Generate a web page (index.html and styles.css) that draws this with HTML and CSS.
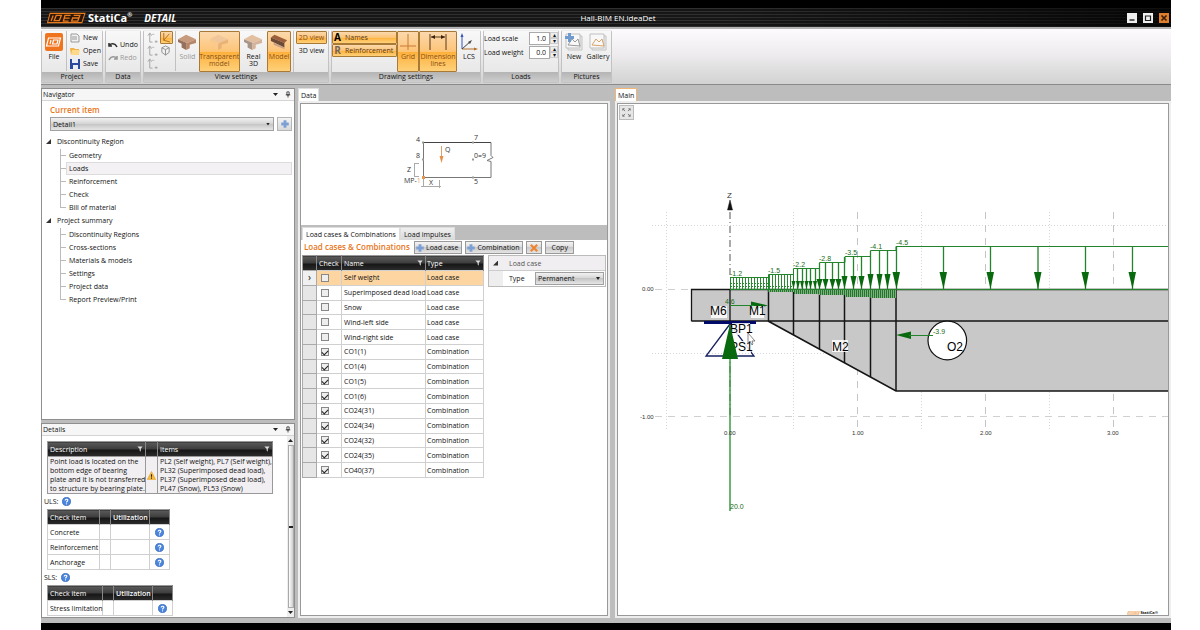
FILE: index.html
```html
<!DOCTYPE html>
<html lang="en">
<head>
    <meta charset="UTF-8">
    <meta name="viewport" content="width=device-width, initial-scale=1.0">
    <title>Hall-BIM EN.ideaDet</title>
    <link rel="stylesheet" href="styles.css">
</head>
<body>
    <!-- Shared icons -->
    <svg class="defs" width="0" height="0" aria-hidden="true">
        <symbol id="plus" viewBox="0 0 10 10"><path d="M3.5 0.5h3v3h3v3h-3v3h-3v-3h-3v-3h3z" fill="#7b9fd6" stroke="#8aa6d0" stroke-width="0.6"/></symbol>
        <symbol id="help" viewBox="0 0 10 10"><circle cx="5" cy="5" r="4.5" fill="#4a86dd" stroke="#2c62b8" stroke-width="0.8"/><path d="M3.5 4c0-2 3-2 3-.3C6.500 4.700 5 4.700 5 6" fill="none" stroke="#fff" stroke-width="1.200"/><circle cx="5" cy="7.600" r="0.700" fill="#fff"/></symbol>
        <symbol id="funnel" viewBox="0 0 8 8"><path d="M0.500 0.500h7L5 3.500v4L3.500 6V3.500z" fill="#ddd"/></symbol>
        <symbol id="pin" viewBox="0 0 8 8"><path d="M2.500 0.500h3v4h-3zM1 4.500h6M4 4.500V8" fill="none" stroke="#222"/></symbol>
        <symbol id="house" viewBox="0 0 20 18"><path d="M0 6L9 1l11 5-10 4z" fill="var(--top)"/><path d="M0 6v3l4 2v4l5 3v-6l1-2z" fill="var(--side)"/><path d="M10 10l10-4v4l-7 2v4l-4 2v-6z" fill="var(--face)"/></symbol>
        <symbol id="axes" viewBox="0 0 12 12"><path d="M3 11V2M1 4l2-3 2 3M3 11h3M9 10h2v1H9z" fill="none" stroke="#a3a3a3"/><path d="M5 2h3v1H5z" fill="#bbb"/></symbol>
        <symbol id="picture" viewBox="0 0 18 18"><path d="M3 3h14v14H3z" fill="#ececec" stroke="#c4c4c4"/><path d="M1 1h14v14H1z" fill="#f8f8f8" stroke="#c0c0c0"/><path d="M3 12l4-6 3 3 3-3 2 7z" fill="none" stroke="var(--ink)"/></symbol>
    </svg>

    <div class="app">
        <header class="titlebar">
            <div class="brand">
                <svg class="logo" viewBox="0 0 38 11" aria-label="IDEA"><path d="M3 1h34l-3 9H0.500z" fill="#2a1708" stroke="#e87b1d"/><path d="M6 3L4 8.500M9 3h5l-2 5H7zM23 3h-5.500l-1.500 5.500h5M17 5.700h5M26 3h6L30 8.500h-6l1-3h6" fill="none" stroke="#e87b1d" stroke-width="1.300"/></svg>
                <span class="brand-name">StatiCa<sup>®</sup></span>
                <span class="product">DETAIL</span>
            </div>
            <div class="filename">Hall-BIM EN.ideaDet</div>
            <div class="window-buttons">
                <button aria-label="Minimize"><svg viewBox="0 0 10 10"><path d="M2.500 7h5" stroke="#222" stroke-width="1.400"/></svg></button>
                <button aria-label="Maximize"><svg viewBox="0 0 10 10"><path d="M2.500 3h5v4.500h-5z" fill="none" stroke="#222" stroke-width="1.200"/></svg></button>
                <button class="close" aria-label="Close"><svg viewBox="0 0 10 10"><path d="M2.500 2.500l5 5M7.500 2.500l-5 5" stroke="#3a1c06" stroke-width="1.600"/></svg></button>
            </div>
        </header>

        <nav class="ribbon">
            <section class="group project">
                <div class="group-body">
                    <button class="big">
                        <svg viewBox="0 0 18 18"><rect width="18" height="18" rx="2" fill="#f0731d"/><path d="M3.500 5h12l-2 8h-12zM6 7l-1 4M8.500 7H13l-1 4H7.500z" fill="none" stroke="#fff" stroke-width="1.200"/></svg>
                        <span>File</span>
                    </button>
                    <div class="stack ruled">
                        <button class="small"><svg viewBox="0 0 10 10"><path d="M1 1h6l2 2v6H1z" fill="#f2f2f2" stroke="#999"/><path d="M2 4h5M2 6h5" stroke="#999"/></svg>New</button>
                        <button class="small"><svg viewBox="0 0 10 10"><path d="M0 2h4l1 1h4v6H1z" fill="#f0b24a"/><path d="M2 4h8L8.500 9H1z" fill="#ffd98a"/></svg>Open</button>
                        <button class="small"><svg viewBox="0 0 10 10"><path d="M0 0h10v10H0z" fill="#29479c"/><path d="M2 0h6v4H2zM3 6h5v4H3z" fill="#e8ecf5"/></svg>Save</button>
                    </div>
                </div>
                <h2>Project</h2>
            </section>
            <section class="group data">
                <div class="group-body">
                    <div class="stack">
                        <button class="small"><svg viewBox="0 0 10 10"><path d="M1 3v3h3M1.500 5.500C3 3 7 3 9 7" fill="none" stroke="#333" stroke-width="1.600"/></svg>Undo</button>
                        <button class="small" disabled><svg viewBox="0 0 10 10"><path d="M9 3v3H6M8.500 5.500C7 3 3 3 1 7" fill="none" stroke="#999" stroke-width="1.600"/></svg>Redo</button>
                    </div>
                </div>
                <h2>Data</h2>
            </section>
            <section class="group view">
                <div class="group-body">
                    <div class="view-icons">
                        <button aria-label="Front view"><svg><use href="#axes"/></svg></button>
                        <button class="active" aria-label="Axonometry"><svg viewBox="0 0 12 12"><path d="M3 1v8l7 2M3 9l6-7" fill="none" stroke="#b06a14"/></svg></button>
                        <button aria-label="Side view"><svg><use href="#axes"/></svg></button>
                        <button aria-label="Perspective"><svg viewBox="0 0 12 12"><path d="M6 1l4 2v5l-4 3-4-3V3zM2 3l4 2 4-2M6 5v6" fill="none" stroke="#8d8d8d"/></svg></button>
                        <button aria-label="Top view"><svg><use href="#axes"/></svg></button>
                    </div>
                    <button class="big ruled solid" disabled><svg class="house-brown"><use href="#house"/></svg><span>Solid</span></button>
                    <button class="big active transparent"><svg class="house-clear"><use href="#house"/></svg><span>Transparent<br>model</span></button>
                    <button class="big real"><svg class="house-pale"><use href="#house"/></svg><span>Real<br>3D</span></button>
                    <button class="big active model"><svg viewBox="0 0 20 18"><path d="M1 4l4-3 14 6-3 3z" fill="#9b5f3c"/><path d="M1 4l15 6v5L1 8z" fill="#6b4a38"/><path d="M4 9.500l12 5.500v2L4 12z" fill="#c8a086"/></svg><span>Model</span></button>
                    <div class="dims ruled">
                        <button class="active">2D view</button>
                        <button>3D view</button>
                    </div>
                </div>
                <h2>View settings</h2>
            </section>
            <section class="group drawing">
                <div class="group-body">
                    <div class="toggles">
                        <button class="active"><b class="letter dark">A</b>Names</button>
                        <button class="active"><b class="letter">R</b>Reinforcement</button>
                    </div>
                    <button class="big active grid-button"><svg viewBox="0 0 18 18"><path d="M9 1v16M1 13h16" stroke="#c97b36"/></svg><span>Grid</span></button>
                    <button class="big active dimension"><svg viewBox="0 0 18 18"><path d="M1 1v16M17 1v16M2 4h14" stroke="#5d3a1c"/><path d="M2 4l4-2v4zM16 4l-4-2v4z" fill="#3a2210"/></svg><span>Dimension<br>lines</span></button>
                    <button class="big lcs"><svg viewBox="0 0 18 18"><path d="M2 16V2" stroke="#3355bb"/><path d="M0.500 4L2 0l1.500 4z" fill="#3355bb"/><path d="M2 16h14" stroke="#b3702b"/><path d="M14 14.500l4 1.500-4 1.500z" fill="#b3702b"/><path d="M2 16l9-8" stroke="#444"/><path d="M12 7l-4 2 2 2z" fill="#444"/></svg><span>LCS</span></button>
                </div>
                <h2>Drawing settings</h2>
            </section>
            <section class="group loads">
                <div class="group-body">
                    <div class="spin-row"><label for="loadScale">Load scale</label><input id="loadScale" type="text" value="1.0"><span class="spin"><button aria-label="Scale up">▴</button><button aria-label="Scale down">▾</button></span></div>
                    <div class="spin-row"><label for="loadWeight">Load weight</label><input id="loadWeight" type="text" value="0.0"><span class="spin"><button aria-label="Weight up">▴</button><button aria-label="Weight down">▾</button></span></div>
                </div>
                <h2>Loads</h2>
            </section>
            <section class="group pictures">
                <div class="group-body">
                    <button class="big"><svg viewBox="0 0 18 18" class="ink-gray"><use href="#picture"/><path d="M3 0h3v3h3v3H6v3H3V6H0V3h3z" fill="#6f9bd1"/></svg><span>New</span></button>
                    <button class="big"><svg viewBox="0 0 18 18" class="ink-orange"><use href="#picture"/></svg><span>Gallery</span></button>
                </div>
                <h2>Pictures</h2>
            </section>
        </nav>

        <div class="workspace">
            <aside class="sidebar">
                <section class="panel navigator">
                    <header class="panel-header"><h2>Navigator</h2><i class="caret"></i><svg><use href="#pin"/></svg></header>
                    <div class="panel-body">
                        <label class="current-label" for="currentItem">Current item</label>
                        <div class="current-row">
                            <div class="select"><select id="currentItem"><option>Detail1</option></select></div>
                            <button class="add" aria-label="Add item"><svg><use href="#plus"/></svg></button>
                        </div>
                        <ul class="tree">
                            <li><span class="branch">Discontinuity Region</span>
                                <ul>
                                    <li><a href="#">Geometry</a></li>
                                    <li><a href="#" class="selected">Loads</a></li>
                                    <li><a href="#">Reinforcement</a></li>
                                    <li><a href="#">Check</a></li>
                                    <li><a href="#">Bill of material</a></li>
                                </ul>
                            </li>
                            <li><span class="branch">Project summary</span>
                                <ul>
                                    <li><a href="#">Discontinuity Regions</a></li>
                                    <li><a href="#">Cross-sections</a></li>
                                    <li><a href="#">Materials &amp; models</a></li>
                                    <li><a href="#">Settings</a></li>
                                    <li><a href="#">Project data</a></li>
                                    <li><a href="#">Report Preview/Print</a></li>
                                </ul>
                            </li>
                        </ul>
                    </div>
                </section>

                <section class="panel details">
                    <header class="panel-header"><h2>Details</h2><i class="caret"></i><svg><use href="#pin"/></svg></header>
                    <div class="details-body">
                        <div class="details-content">
                            <table class="dark-table messages">
                                <thead><tr><th class="col-desc"><div>Description<svg><use href="#funnel"/></svg></div></th><th class="col-icon"></th><th><div>Items<svg><use href="#funnel"/></svg></div></th></tr></thead>
                                <tbody><tr>
                                    <td>Point load is located on the<br>bottom edge of bearing<br>plate and it is not transferred<br>to structure by bearing plate.</td>
                                    <td class="warn"><svg viewBox="0 0 10 10"><path d="M5 0.500L9.700 9.500H0.300z" fill="#f9bb3d" stroke="#e39a1c" stroke-width="0.600"/><path d="M5 3.500v3M5 7.300v1.200" stroke="#222" stroke-width="1.200"/></svg></td>
                                    <td>PL2 (Self weight), PL7 (Self weight),<br>PL32 (Superimposed dead load),<br>PL37 (Superimposed dead load),<br>PL47 (Snow), PL53 (Snow)</td>
                                </tr></tbody>
                            </table>
                            <p class="state">ULS: <svg><use href="#help"/></svg></p>
                            <table class="dark-table checks">
                                <thead><tr><th class="col-item">Check item</th><th class="col-gap"></th><th class="col-util">Utilization</th><th class="col-help"></th></tr></thead>
                                <tbody>
                                    <tr><td>Concrete</td><td></td><td></td><td><svg><use href="#help"/></svg></td></tr>
                                    <tr><td>Reinforcement</td><td></td><td></td><td><svg><use href="#help"/></svg></td></tr>
                                    <tr><td>Anchorage</td><td></td><td></td><td><svg><use href="#help"/></svg></td></tr>
                                </tbody>
                            </table>
                            <p class="state">SLS: <svg><use href="#help"/></svg></p>
                            <table class="dark-table checks wide">
                                <thead><tr><th class="col-item">Check item</th><th class="col-gap"></th><th class="col-util">Utilization</th><th class="col-help"></th></tr></thead>
                                <tbody>
                                    <tr><td>Stress limitation</td><td></td><td></td><td><svg><use href="#help"/></svg></td></tr>
                                </tbody>
                            </table>
                        </div>
                        <div class="scrollbar"><i class="up"></i><span class="track"><i class="grip"></i></span><i class="caret"></i></div>
                    </div>
                </section>
            </aside>

            <section class="data-pane">
                <div class="tabs"><button class="tab">Data</button></div>
                <div class="frame">
                    <div class="sketch">
                        <svg width="100" height="60" viewBox="400 130 100 60">
                            <path d="M423 142.500h68" stroke="#444"/>
                            <path d="M423.500 143v34M423 177.500h68v-16l-4-1 6-3-2-2v-13" fill="none" stroke="#777"/>
                            <path d="M414 163.500h5M414 176.500h5M414.500 163v14M423.500 179v8M439.500 180v8M421 186.500h20" fill="none" stroke="#aaa"/>
                            <path d="M441.500 146v12" stroke="#d9a273"/><path d="M439.500 156h4l-2 7z" fill="#e6924a"/>
                            <path d="M422 176h3v3h-3z" fill="#e9954f"/>
                            <path d="M422 142.500h2M472 142.500h2M422 159.500h2M472 159.500h2M472 177.500h2" stroke="#999" stroke-width="2"/>
                            <text x="416" y="142">4</text><text x="474" y="140">7</text><text x="416" y="158">8</text>
                            <text x="445" y="152">Q</text><text x="474" y="158">0=9</text><text x="407" y="172">Z</text>
                            <text x="404" y="183">MP-<tspan fill="#eaa566">1</tspan></text><text x="429" y="185">X</text><text x="474" y="184">5</text>
                        </svg>
                    </div>
                    <div class="subtabs"><button class="tab">Load cases &amp; Combinations</button><button class="tab inactive">Load impulses</button></div>
                    <div class="cases">
                        <div class="toolbar">
                            <h3>Load cases &amp; Combinations</h3>
                            <button><svg><use href="#plus"/></svg>Load case</button>
                            <button><svg><use href="#plus"/></svg>Combination</button>
                            <button class="delete" aria-label="Delete"><svg viewBox="0 0 10 10"><path d="M1 1l8 8M9 1L1 9" stroke="#ee8331" stroke-width="2.600"/></svg></button>
                            <button class="copy">Copy</button>
                        </div>
                        <div class="cases-row">
                            <table class="case-table">
                                <thead><tr><th class="col-mark"></th><th class="col-check">Check</th><th class="col-name"><div>Name<svg><use href="#funnel"/></svg></div></th><th class="col-type"><div>Type<svg><use href="#funnel"/></svg></div></th></tr></thead>
                                <tbody>
                                    <tr class="selected"><td>›</td><td><input type="checkbox" aria-label="Self weight"></td><td>Self weight</td><td>Load case</td></tr>
                                    <tr><td></td><td><input type="checkbox" aria-label="Superimposed dead load"></td><td>Superimposed dead load</td><td>Load case</td></tr>
                                    <tr><td></td><td><input type="checkbox" aria-label="Snow"></td><td>Snow</td><td>Load case</td></tr>
                                    <tr><td></td><td><input type="checkbox" aria-label="Wind-left side"></td><td>Wind-left side</td><td>Load case</td></tr>
                                    <tr><td></td><td><input type="checkbox" aria-label="Wind-right side"></td><td>Wind-right side</td><td>Load case</td></tr>
                                    <tr><td></td><td><input type="checkbox" aria-label="CO1(1)" checked></td><td>CO1(1)</td><td>Combination</td></tr>
                                    <tr><td></td><td><input type="checkbox" aria-label="CO1(4)" checked></td><td>CO1(4)</td><td>Combination</td></tr>
                                    <tr><td></td><td><input type="checkbox" aria-label="CO1(5)" checked></td><td>CO1(5)</td><td>Combination</td></tr>
                                    <tr><td></td><td><input type="checkbox" aria-label="CO1(6)" checked></td><td>CO1(6)</td><td>Combination</td></tr>
                                    <tr><td></td><td><input type="checkbox" aria-label="CO24(31)" checked></td><td>CO24(31)</td><td>Combination</td></tr>
                                    <tr><td></td><td><input type="checkbox" aria-label="CO24(34)" checked></td><td>CO24(34)</td><td>Combination</td></tr>
                                    <tr><td></td><td><input type="checkbox" aria-label="CO24(32)" checked></td><td>CO24(32)</td><td>Combination</td></tr>
                                    <tr><td></td><td><input type="checkbox" aria-label="CO24(35)" checked></td><td>CO24(35)</td><td>Combination</td></tr>
                                    <tr><td></td><td><input type="checkbox" aria-label="CO40(37)" checked></td><td>CO40(37)</td><td>Combination</td></tr>
                                </tbody>
                            </table>
                            <div class="properties">
                                <div class="prop-title"><i class="fold"></i>Load case</div>
                                <div class="prop-row"><label for="caseType">Type</label><div class="select"><select id="caseType"><option>Permanent</option></select></div></div>
                            </div>
                        </div>
                    </div>
                </div>
            </section>

            <main class="main-pane">
                <div class="tabs"><button class="tab focus">Main</button></div>
                <div class="frame">
                    <div class="canvas">
                        <button class="fit" aria-label="Zoom to fit"><svg viewBox="0 0 14 14"><path d="M3 3l2.500 2.500M11 3L8.500 5.500M3 11l2.500-2.500M11 11L8.500 8.500M3 5V3h2M9 3h2v2M3 9v2h2M9 11h2V9" fill="none" stroke="#777"/></svg></button>
                        <svg class="model-view">
                            <defs>
                                <pattern id="hatch" width="3" height="12" patternUnits="userSpaceOnUse" x="730" y="277"><path d="M0.500 0v12" stroke="#2a8a31"/></pattern>
                                <pattern id="denseHatch" width="2" height="10" patternUnits="userSpaceOnUse" x="768" y="289"><rect width="2" height="10" fill="#86ab88"/><path d="M0.500 0v10" stroke="#1c7a24"/></pattern>
                            </defs>
                            <g transform="translate(-618 -104)">
                                <!-- dotted half metre grid, dashed metre grid -->
                                <g stroke="#d5d5dc" stroke-dasharray="1 2">
                                    <path d="M666.500 212v218M793.500 212v218M921.500 212v218M1049.500 212v218M652 225.500h520M652 353.500h520"/>
                                </g>
                                <path d="M857.500 212v218M985.500 212v218M1113.500 212v218" stroke="#c4c4c4" stroke-dasharray="7 6"/>
                                <path d="M655 289.500h37M655 416.500h520" stroke="#d0d0d0" stroke-dasharray="7 6"/>
                                <path d="M730 212v66M730 324v94" stroke="#aaa" stroke-width="2" stroke-dasharray="7 3 1 3"/>
                                <path d="M727.500 210h5l-2.500-10z" fill="#111" stroke="#111" stroke-width="0.500"/>

                                <!-- members -->
                                <path d="M692 289h480v102H896l-128-70h-76z" fill="#c8c8c8"/>
                                <g fill="none" stroke="#151515">
                                    <path d="M1172 289.500H691.500v32M730 289v32" stroke-width="1.300"/>
                                    <path d="M692 321h480M768 321l128 70h276" stroke-width="1.600"/>
                                    <path d="M768.500 289v32M793.500 289v46M819.500 289v60M844.500 289v74M870.500 289v88M896 289v102" stroke-width="1.500"/>
                                </g>
                                <path d="M768 289h26v3h-26zM794 289h25v5h-25zM819 289h26v6h-26zM845 289h25v8h-25zM870 289h26v9h-26z" fill="url(#denseHatch)"/>
                                <circle cx="947.300" cy="340.500" r="19.300" fill="#fff" stroke="#111" stroke-width="1.200"/>

                                <!-- line loads -->
                                <path d="M730 277h38v12h-38zM768 275h26v14h-26z" fill="url(#hatch)"/>
                                <path d="M730 283.500h38M730 286.500h64" stroke="#2a8a31" stroke-dasharray="2 1"/>
                                <g fill="none" stroke="#23852b">
                                    <path d="M730.500 289v-11.500h38V289M768.500 274.500h25M793.500 289v-20.500h26v-6h25.500v-6h25.500v-6h25.500v-4h276M768.500 289v-14.500M730 289.500h442" />
                                    <path d="M797.500 269v20M802.500 269v20M806.500 269v20M810.500 269v20M815.500 269v20M819.500 263v26M825.500 263v26M832.500 263v26M838.500 263v26M844.500 257v32M853.500 257v32M861.500 257v32M870.500 251v38M879.500 251v38M887.500 251v38M896.500 246v43M943.500 246v43M990.500 246v43M1038 246v43M1085.500 246v43M1132.500 246v43" stroke-width="1.300"/>
                                </g>
                                <g fill="#08690f">
                                    <path d="M791.500 281h4l-2 8zM796 281h4l-2 8zM800 281h4l-2 8zM804.500 281h4l-2 8zM808.500 281h4l-2 8zM813 281h4l-2 8z"/>
                                    <path d="M816.500 279h6l-3 10zM822.500 279h6l-3 10zM829.500 279h6l-3 10zM835.500 279h6l-3 10z"/>
                                    <path d="M841.500 276h6l-3 13zM850.500 276h6l-3 13zM858.500 276h6l-3 13zM867.500 274h6l-3 15zM876.500 274h6l-3 15zM884.500 274h6l-3 15z"/>
                                    <path d="M892.500 272h7.500l-3.500 17zM939.500 272h7.500l-3.500 17zM986.500 272h7.500l-3.500 17zM1034 272h7.500l-3.500 17zM1081.500 272h7.500l-3.500 17zM1128.500 272h7.500l-3.500 17z"/>
                                    <path d="M751 301.500l17 4-17 4zM911 331.500l-15 3.500 15 4z"/>
                                </g>
                                <path d="M730 305.500h24M909 335.500h24" stroke="#23852b"/>

                                <!-- support -->
                                <path d="M704 321h52v3h-52z" fill="#000a68"/>
                                <path d="M730 324l-24 32h48z" fill="none" stroke="#16205e" stroke-width="1.300"/>
                                <g fill="#fff"><path d="M732 323h18v12h-18zM738 341h13v12h-13zM711 306h16v12h-16zM751 306h13v12h-13zM832 340h16v12h-16z" fill-opacity="0.850"/></g>
                                <g class="member-labels">
                                    <text x="710" y="315">M6</text><text x="749" y="315">M1</text><text x="730" y="333">BP1</text><text x="730" y="351">PS1</text><text x="832" y="351">M2</text><text x="947" y="351">O2</text>
                                </g>
                                <path d="M730 325v186" stroke="#3c9a44" stroke-width="1.500"/>
                                <path d="M730 324l8 35h-16z" fill="#08690f"/>

                                <g class="load-labels">
                                    <text x="730" y="276">-1.2</text><text x="768" y="273">-1.5</text><text x="793" y="267">-2.2</text><text x="819" y="261">-2.8</text><text x="845" y="255">-3.5</text><text x="870" y="249">-4.1</text><text x="896" y="245">-4.5</text>
                                    <text x="725" y="304">4.6</text><text x="933" y="334">-3.9</text><text x="730" y="509">20.0</text>
                                </g>
                                <g class="axis-labels">
                                    <text x="727" y="198" class="axis-name">Z</text>
                                    <text x="642" y="291">0.00</text><text x="640" y="419">-1.00</text><text x="724" y="435">0.00</text><text x="852" y="435">1.00</text><text x="980" y="435">2.00</text><text x="1107" y="435">3.00</text>
                                </g>
                                <path d="M748 333v10l2-2 2 4 1-1-1-3h3z" fill="#fff" stroke="#555" stroke-width="0.700"/>
                            </g>
                        </svg>
                        <div class="watermark"><svg viewBox="0 0 38 11"><path d="M3 1h34l-3 9H0.500z" fill="#f4c08d" stroke="#eda660"/><path d="M6 3L4 8.500M9 3h5l-2 5H7zM23 3h-5.500l-1.500 5.500h5M26 3h6L30 8.500h-6" fill="none" stroke="#fff"/></svg>StatiCa®</div>
                    </div>
                </div>
            </main>
        </div>
    </div>
</body>
</html>
```
FILE: styles.css
```css
* {
    box-sizing: border-box;
}

body {
    margin: 0;
    background: #fff;
    font-family: "Open Sans", "Noto Sans", sans-serif;
    font-size: 7px;
    line-height: 9px;
    color: #111;
}

button, input, select {
    font: inherit;
    color: inherit;
    margin: 0;
    padding: 0;
    border: 0;
    background: none;
}

h2, h3, p, ul {
    margin: 0;
    padding: 0;
    font-size: inherit;
    font-weight: normal;
}

ul {
    list-style: none;
}

svg {
    display: block;
    flex: none;
}

.defs {
    position: absolute;
}

.app {
    display: flex;
    flex-direction: column;
    min-height: 100vh;
    margin: 0 29px 0 41px;
    padding: 8px 0 7px;
    background: #000;
}

/* Title bar */
.titlebar {
    display: grid;
    grid-template-columns: 1fr auto 1fr;
    align-items: center;
    height: 19px;
    padding: 0 2px 0 6px;
    background: linear-gradient(90deg, transparent 60%, rgba(0, 0, 0, 0.7)), repeating-linear-gradient(#303030 0 1px, #161616 1px 3px);
    color: #fff;
}

.brand {
    display: flex;
    align-items: center;
    font-weight: bold;
    font-size: 11px;
    line-height: 16px;
}

.logo {
    width: 39px;
    height: 12px;
}

.brand-name {
    margin: 0 12px 0 2px;
}

.brand-name sup {
    font-size: 6px;
    line-height: 6px;
}

.product {
    font-style: italic;
    font-size: 10px;
}

.filename {
    margin-left: 20px;
    font-size: 8px;
}

.window-buttons {
    display: flex;
    justify-content: flex-end;
    gap: 6px;
}

.window-buttons button {
    width: 10px;
    height: 10px;
    background: #f0f0f0;
}

.window-buttons .close {
    background: #dd7f2c;
}

/* Ribbon */
.ribbon {
    display: flex;
    gap: 2px;
    height: 58px;
    padding: 1px 0;
    border-top: 2px solid #b4b4b4;
    border-bottom: 1px solid #8a8a8a;
    background: linear-gradient(#fdfbfd, #eceaec 50%, #d2d2d2);
}

.group {
    display: flex;
    flex-direction: column;
    background: linear-gradient(#f8f8f8, #e4e4e4);
    border: 1px solid #c2c2c2;
    border-top-color: #eee;
    border-radius: 2px;
}

.group h2 {
    flex: none;
    height: 10px;
    text-align: center;
    background: linear-gradient(#b4b4b4, #cdcdcd);
    color: #111;
}

.group-body {
    display: flex;
    flex: 1;
    min-height: 0;
    padding: 0 1px;
}

.project {
    width: 62px;
}

.data {
    width: 36px;
}

.view {
    width: 186px;
}

.drawing {
    width: 150px;
}

.loads {
    width: 76px;
}

.pictures {
    width: 51px;
}

.ribbon .active {
    border: 1px solid #a87a35;
    border-radius: 1px;
    background: linear-gradient(#fbd8ac, #fdc476 50%, #feb03a 51%, #fed07a);
    color: #8a4f14;
}

.ruled {
    border-left: 1px solid #c0c0c0;
}

.big {
    display: flex;
    flex-direction: column;
    align-items: center;
    width: 22px;
    height: 41px;
    padding-top: 2px;
    line-height: 7px;
    text-align: center;
    white-space: nowrap;
}

.big svg {
    width: 18px;
    height: 18px;
    margin-bottom: 2px;
}

.big:disabled, .small:disabled {
    color: #999;
}

.stack {
    display: flex;
    flex-direction: column;
    height: 40px;
    margin-left: 1px;
    padding-left: 3px;
}

.small {
    display: flex;
    align-items: center;
    gap: 3px;
    height: 13px;
}

.small svg {
    width: 10px;
    height: 10px;
}

.data .stack {
    justify-content: center;
    margin-left: 0;
    padding-left: 1px;
}

.data .small {
    gap: 2px;
}

.view-icons {
    display: grid;
    grid-template-columns: 13px 13px;
    grid-auto-rows: 13px;
    margin: 0 2px;
}

.view-icons svg {
    width: 11px;
    height: 11px;
}

.view .solid {
    width: 25px;
    height: 40px;
}

.view .transparent {
    width: 41px;
    padding-top: 1px;
}

.view .real {
    width: 29px;
}

.view .model {
    width: 25px;
    padding-top: 1px;
}

.house-brown {
    --top: #c79a7d;
    --side: #96705c;
    --face: #b78567;
}

.house-clear {
    --top: #f0c79a;
    --side: #fac98b;
    --face: #e9b277;
}

.house-pale {
    --top: #e3bfa2;
    --side: #a99588;
    --face: #d5b39a;
}

.dims {
    margin-left: 2px;
    padding-left: 2px;
}

.dims button {
    display: block;
    width: 31px;
    height: 13px;
}

.drawing .group-body {
    padding: 0;
}

.toggles {
    width: 65px;
}

.toggles button {
    display: flex;
    align-items: center;
    gap: 3px;
    width: 100%;
    height: 13px;
}

.ribbon .toggles .active {
    color: #5a3810;
}

.letter {
    width: 9px;
    font-size: 10px;
    color: #765;
}

.letter.dark {
    color: #000;
}

.drawing .dimension {
    width: 38px;
    padding-top: 1px;
}

.drawing .grid-button {
    padding-top: 1px;
}

.drawing .lcs {
    margin-left: 1px;
}

.loads .group-body {
    flex-direction: column;
    padding: 0;
}

.spin-row {
    display: flex;
    align-items: center;
    height: 14px;
}

.spin-row label {
    flex: 1;
}

.spin-row input {
    width: 21px;
    height: 13px;
    padding-right: 3px;
    border: 1px solid #aaa;
    background: #fff;
    text-align: right;
}

.spin {
    display: flex;
    flex-direction: column;
    width: 8px;
}

.spin button {
    height: 6px;
    border: 1px solid #ccc;
    background: #eee;
    font-size: 6px;
    line-height: 4px;
}

.pictures .group-body {
    gap: 2px;
}

.ink-gray {
    --ink: #999;
}

.ink-orange {
    --ink: #d9a36a;
}

/* Workspace */
.workspace {
    display: grid;
    grid-template-columns: 254px 316px 1fr;
    gap: 2px;
    flex: 1;
    padding: 3px 0 5px;
    background: #bdbdbd;
}

.sidebar {
    display: flex;
    flex-direction: column;
    gap: 3px;
    min-height: 0;
}

.panel {
    display: flex;
    flex-direction: column;
    border: 1px solid #8e8e8e;
    background: #fff;
}

.navigator {
    flex: 1;
}

.panel-header {
    display: flex;
    align-items: center;
    gap: 7px;
    height: 12px;
    padding: 0 3px 0 1px;
    border-bottom: 1px solid #d4d4d4;
    background: #f6f6f6;
}

.panel-header h2 {
    flex: 1;
}

.panel-header svg {
    width: 6px;
    height: 7px;
}

.caret {
    width: 5px;
    height: 3px;
    background: #222;
    clip-path: polygon(0 0, 100% 0, 50% 100%);
}

.panel-body {
    padding: 4px 2px 4px 4px;
}

.current-label {
    display: block;
    padding-left: 4px;
    color: #e8751a;
    font-size: 8px;
    font-weight: 600;
    line-height: 10px;
}

.current-row {
    display: flex;
    gap: 3px;
    margin: 2px 0 4px 4px;
}

.select {
    display: flex;
    flex: 1;
    align-items: center;
    height: 14px;
    padding-right: 3px;
    border: 1px solid #a0a0a0;
    background: linear-gradient(#f2f2f2, #d4d4d4 49%, #c4c4c4 50%, #e6e6e6);
}

.select select {
    flex: 1;
    padding-left: 2px;
    appearance: none;
    outline: 0;
}

.select::after {
    content: "";
    width: 4px;
    height: 3px;
    background: #222;
    clip-path: polygon(0 0, 100% 0, 50% 100%);
}

.add {
    display: grid;
    place-items: center;
    width: 15px;
    height: 14px;
    border: 1px solid #b5b5b5;
    background: linear-gradient(#f4f4f4, #d8d8d8);
}

.add svg {
    width: 8px;
    height: 8px;
}

.branch {
    display: flex;
    align-items: center;
    gap: 6px;
    height: 13px;
}

.branch::before, .fold {
    content: "";
    width: 5px;
    height: 5px;
    background: #333;
    clip-path: polygon(100% 0, 100% 100%, 0 100%);
}

.tree ul {
    padding: 1px 0 0 14px;
}

.tree ul li {
    display: flex;
    height: 13px;
}

.tree ul li::before {
    content: "";
    width: 6px;
    background:
        linear-gradient(#bbb, #bbb) 0 0 / 1px 100% no-repeat,
        linear-gradient(#bbb, #bbb) 0 50% / 100% 1px no-repeat;
}

.tree ul li:last-child::before {
    background-size: 1px 50%, 100% 1px;
}

.tree a {
    flex: 1;
    padding: 1px 2px;
    border: 1px solid transparent;
    color: #111;
    text-decoration: none;
}

.tree a.selected {
    border-color: #dcdcdc;
    background: #f3f1f3;
}

/* Details */
.details {
    height: 195px;
}

.details-body {
    display: flex;
    flex: 1;
}

.details-content {
    flex: 1;
    padding: 5px 2px 0;
}

.dark-table, .case-table {
    border-collapse: collapse;
    table-layout: fixed;
    border: 1px solid #999;
}

.dark-table {
    margin-left: 3px;
}

th {
    height: 15px;
    padding: 0 2px;
    border-right: 1px solid #888;
    background: linear-gradient(#5a5a5a, #3c3c3c 49%, #151515 50%, #2c2c2c);
    color: #fff;
    font-weight: normal;
    text-align: left;
    white-space: nowrap;
}

th div {
    display: flex;
    justify-content: space-between;
    align-items: center;
}

th svg {
    width: 6px;
    height: 6px;
}

td {
    padding: 0 2px;
    border: 1px solid #d0d0d0;
    white-space: nowrap;
}

.messages {
    width: 226px;
}

.messages td {
    padding: 0 1px 0 2px;
    background: #f1eff1;
    border-color: #999;
}

.col-desc {
    width: 98px;
}

.col-icon {
    width: 12px;
}

.messages .warn {
    padding: 0 1px;
}

.warn svg {
    width: 9px;
    height: 9px;
}

.state {
    display: flex;
    align-items: center;
    gap: 4px;
    height: 15px;
}

.state svg {
    width: 9px;
    height: 9px;
}

.checks {
    width: 123px;
}

.checks td {
    height: 15px;
}

.checks td svg {
    width: 9px;
    height: 9px;
    margin: auto;
}

.col-item {
    width: 52px;
}

.wide {
    width: 126px;
}

.wide .col-item {
    width: 55px;
}

.col-gap {
    width: 11px;
}

.col-util {
    width: 39px;
    font-weight: 600;
}

.scrollbar {
    display: flex;
    flex-direction: column;
    align-items: center;
    gap: 3px;
    width: 7px;
    padding: 3px 0;
    background: #eee;
}

.up {
    width: 5px;
    height: 3px;
    background: #222;
    clip-path: polygon(50% 0, 100% 100%, 0 100%);
}

.track {
    display: flex;
    align-items: center;
    flex: 1;
    width: 6px;
    border: 1px solid #aaa;
    background: linear-gradient(90deg, #fff, #ccc);
}

.grip {
    width: 100%;
    height: 2px;
    background: #222;
}

/* Tabbed panes */
.data-pane, .main-pane {
    display: flex;
    flex-direction: column;
    min-width: 0;
}

.data-pane {
    padding: 0 3px 0 1px;
}

.tabs {
    display: flex;
    height: 13px;
}

.tab {
    padding: 0 3px;
    border: 1px solid #ddd;
    border-bottom: 0;
    background: #fff;
}

.tabs .tab {
    padding: 0 2px;
}

.tab.focus {
    border-color: #efb676;
}

.tab.inactive {
    background: linear-gradient(#f0f0f0, #d8d8d8);
}

.frame {
    display: flex;
    flex-direction: column;
    flex: 1;
    padding: 2px;
    background: #eee;
}

.sketch {
    display: flex;
    justify-content: center;
    height: 122px;
    padding: 26px 8px 0 0;
    border: 1px solid #999;
    border-bottom: 0;
    background: #fff;
}

.sketch text {
    font-size: 7px;
    fill: #333;
}

.subtabs {
    display: flex;
    height: 15px;
    padding: 2px 1px 0;
    border: 1px solid #999;
    border-width: 0 1px;
    background: #bdbdbd;
}

.cases {
    flex: 1;
    padding: 1px 1px 0;
    border: 1px solid #999;
    border-top: 0;
    background: #fff;
}

.toolbar {
    display: flex;
    gap: 3px;
    height: 13px;
    margin-bottom: 1px;
}

.toolbar h3 {
    width: 109px;
    padding-left: 2px;
    color: #e8751a;
    font-size: 8px;
    font-weight: 600;
    line-height: 12px;
    white-space: nowrap;
}

.toolbar button {
    display: flex;
    align-items: center;
    gap: 2px;
    padding: 0 3px 0 1px;
    border: 1px solid #999;
    background: linear-gradient(#f4f4f4, #dcdcdc 49%, #cacaca 50%, #e4e4e4);
}

.toolbar svg {
    width: 8px;
    height: 8px;
}

.toolbar .delete {
    padding: 0 3px;
}

.toolbar .copy {
    padding: 0 5px;
}

.cases-row {
    display: flex;
    align-items: flex-start;
    gap: 4px;
}

.case-table {
    width: 182px;
    height: 223px;
}

.case-table td:first-child {
    padding: 0;
    background: #e6e6e6;
    border-color: #aaa;
    font-size: 10px;
    text-align: center;
}

.case-table td:last-child, .case-table .col-type {
    padding-left: 1px;
}

.case-table .selected td {
    background: #fdd5a0;
}

.case-table .selected td:first-child {
    background: #f0f0f0;
}

.col-mark {
    width: 14px;
}

.col-check {
    width: 25px;
}

.col-name {
    width: 84px;
}

.case-table input {
    display: grid;
    place-items: center;
    width: 8px;
    height: 8px;
    margin-left: 2px;
    border: 1px solid #888;
    background: #eee;
    appearance: none;
}

.case-table input:checked::before {
    content: "";
    width: 5px;
    height: 3px;
    border: solid #222;
    border-width: 0 0 1px 1px;
    rotate: -45deg;
}

.properties {
    flex: 1;
    border: 1px solid #bbb;
}

.prop-title {
    display: flex;
    align-items: center;
    gap: 11px;
    height: 15px;
    padding-left: 4px;
    border-bottom: 1px solid #ccc;
    background: #f0eef0;
    color: #555;
}

.prop-row {
    display: flex;
    align-items: center;
    height: 15px;
    padding-right: 1px;
    border-left: 14px solid #eee;
}

.prop-row label {
    width: 32px;
    padding-left: 6px;
}

.prop-row .select {
    height: 13px;
}

.canvas {
    display: grid;
    flex: 1;
    overflow: hidden;
    border: 1px solid #999;
    background: #fff;
}

.canvas > * {
    grid-area: 1 / 1;
}

.model-view {
    width: 100%;
    height: 100%;
}

.model-view text {
    font-family: "Liberation Sans", Arial, sans-serif;
}

.fit {
    z-index: 1;
    width: 15px;
    height: 15px;
    margin: 1px;
    border: 1px solid #bbb;
    background: #e6e6e6;
}

.member-labels {
    font-size: 12px;
}

.load-labels {
    font-size: 7px;
    fill: #196b20;
}

.axis-labels {
    font-size: 6px;
    fill: #333;
}

.axis-name {
    font-size: 8px;
}

.watermark {
    display: flex;
    align-items: center;
    align-self: end;
    justify-self: end;
    margin-right: 10px;
    font-size: 4px;
    font-weight: bold;
    line-height: 5px;
}

.watermark svg {
    width: 13px;
    height: 4px;
}
```
